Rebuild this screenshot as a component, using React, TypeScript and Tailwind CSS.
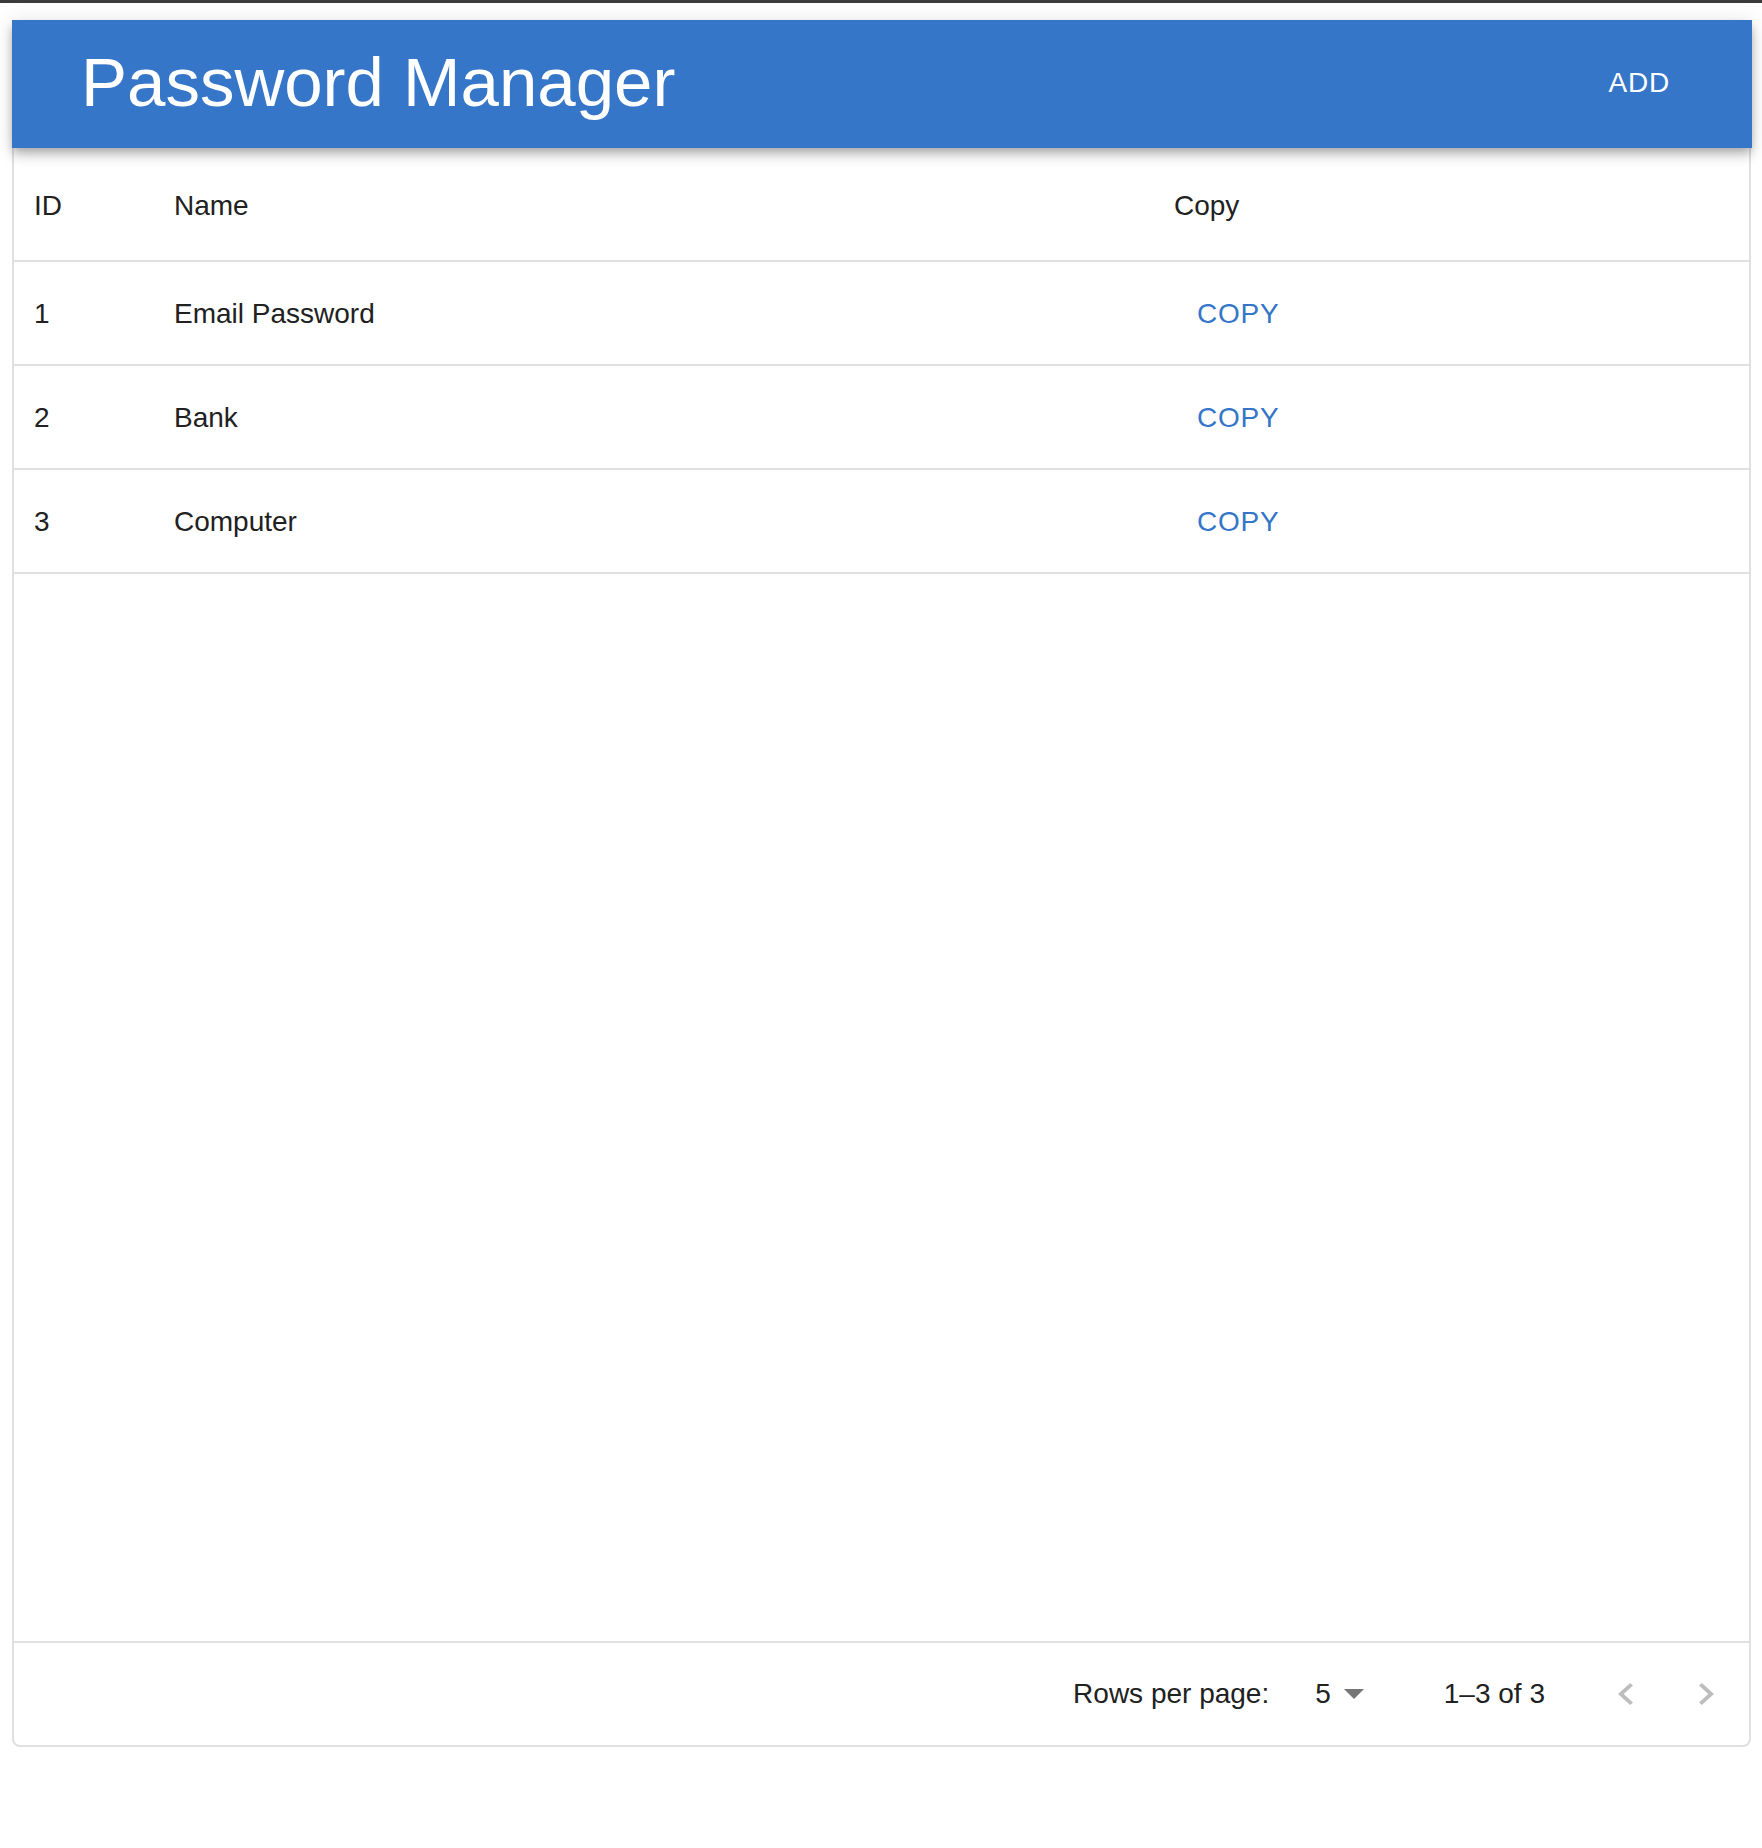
import React from "react";

interface Entry {
  id: number;
  name: string;
}

const entries: Entry[] = [
  { id: 1, name: "Email Password" },
  { id: 2, name: "Bank" },
  { id: 3, name: "Computer" },
];

function ChevronLeft() {
  return (
    <svg viewBox="8 6 7.41 12" preserveAspectRatio="none" className="h-[22px] w-[15px] fill-[#bdbdbd]" aria-hidden="true">
      <path d="M15.41 16.59L10.83 12l4.58-4.59L14 6l-6 6 6 6 1.41-1.41z" />
    </svg>
  );
}

function ChevronRight() {
  return (
    <svg viewBox="8.59 6 7.41 12" preserveAspectRatio="none" className="h-[22px] w-[15px] fill-[#bdbdbd]" aria-hidden="true">
      <path d="M8.59 16.59L13.17 12 8.59 7.41 10 6l6 6-6 6-1.41-1.41z" />
    </svg>
  );
}

function DropArrow() {
  return (
    <svg viewBox="7 10 10 5" preserveAspectRatio="none" className="h-[10px] w-[20px] fill-[#757575]" aria-hidden="true">
      <path d="M7 10l5 5 5-5z" />
    </svg>
  );
}

export default function App() {
  return (
    <div className="min-h-screen bg-white font-['Liberation_Sans',Arial,sans-serif] text-[#212121]">
      <div className="h-[3px] bg-[#3b3b3b]" />
      <div className="pl-[12px] pr-[10px] pt-[17px]">
        <header className="relative z-10 flex h-[128px] items-center justify-between bg-[#3676c9] pb-[3px] pl-[69px] pr-[82px] shadow-[0px_4px_8px_-2px_rgba(0,0,0,0.2),0px_8px_10px_0px_rgba(0,0,0,0.14),0px_2px_20px_0px_rgba(0,0,0,0.12)]">
          <h1 className="text-[69px] font-normal leading-none text-white">Password Manager</h1>
          <button className="text-[28px] uppercase leading-none tracking-[0.8px] text-white">Add</button>
        </header>

        <div className="mr-[1px] flex h-[1599px] flex-col rounded-b-[8px] border-x-2 border-b-2 border-[#e0e0e0] text-[28px]">
          <div className="flex h-[114px] shrink-0 items-center border-b-2 border-[#e0e0e0] pt-[3px]">
            <div className="w-[140px] pl-[20px]">ID</div>
            <div className="w-[1000px] pl-[20px]">Name</div>
            <div className="pl-[20px]">Copy</div>
          </div>

          {entries.map((entry) => (
            <div key={entry.id} className="flex h-[104px] shrink-0 items-center border-b-2 border-[#e0e0e0] pt-[2px]">
              <div className="w-[140px] pl-[20px]">{entry.id}</div>
              <div className="w-[1000px] pl-[20px]">{entry.name}</div>
              <div className="pl-[43px]">
                <button className="uppercase tracking-[0.8px] text-[#3676c9]">Copy</button>
              </div>
            </div>
          ))}

          <div className="flex-1" />

          <div className="flex h-[104px] shrink-0 items-center justify-end border-t-2 border-[#e0e0e0] pr-[35px]">
            <span>Rows per page:</span>
            <span className="ml-[46px]">5</span>
            <span className="ml-[13px]">
              <DropArrow />
            </span>
            <span className="ml-[80px]">1–3 of 3</span>
            <span className="ml-[73px]">
              <ChevronLeft />
            </span>
            <span className="ml-[66px]">
              <ChevronRight />
            </span>
          </div>
        </div>
      </div>
    </div>
  );
}
